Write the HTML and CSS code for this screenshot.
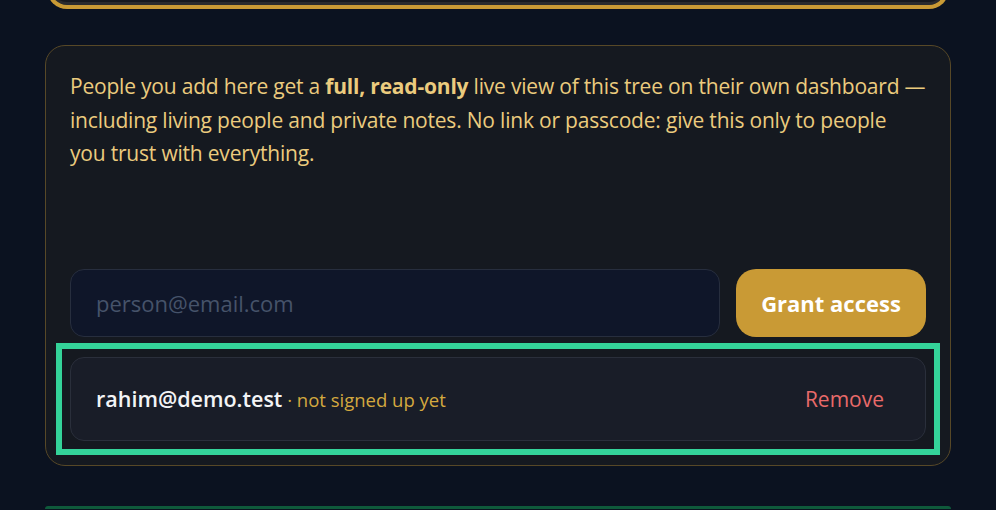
FILE: index.html
```html
<!DOCTYPE html>
<html lang="en">
<head>
<meta charset="utf-8">
<title>Share tree</title>
<link rel="stylesheet" href="styles.css">
</head>
<body>
<div class="page">
  <div class="prev-card"></div>
  <section class="card">
    <p class="intro">People you add here get a <strong>full, read-only</strong> live view of this tree on their own dashboard — including living people and private notes. No link or passcode: give this only to people you trust with everything.</p>
    <form class="grant" onsubmit="return false">
      <input class="email-input" type="email" placeholder="person@email.com">
      <button class="grant-btn" type="submit">Grant access</button>
    </form>
    <div class="viewer-row">
      <div class="viewer-info"><span class="viewer-email">rahim@demo.test</span><span class="viewer-status"> · not signed up yet</span></div>
      <button class="remove-btn" type="button">Remove</button>
    </div>
  </section>
  <div class="next-card"></div>
</div>
</body>
</html>
```
FILE: styles.css
```css
* { box-sizing: border-box; }
html, body { margin: 0; padding: 0; }
body {
  background: #0b1220;
  font-family: "Open Sans", "Noto Sans", sans-serif;
  overflow: hidden;
  height: 510px;
}
.page {
  padding: 0 45px;
}
.prev-card {
  height: 40px;
  margin: -31px 2px 0;
  background: #16191f;
  border: 4px solid #c99a35;
  border-top: none;
  border-radius: 0 0 20px 20px;
  box-shadow: inset 0 -3px 0 #2a2b2e;
}
.card {
  margin-top: 36px;
  background: #151920;
  border: 1px solid #574827;
  border-radius: 20px;
  padding: 24px;
}
.intro {
  margin: 0 0 98px;
  color: #ebcb7e;
  font-size: 21px;
  line-height: 33.5px;
  letter-spacing: -0.2px;
}
.intro strong { font-weight: 700; }
.grant {
  display: flex;
  gap: 16px;
  margin: 0;
}
.email-input {
  flex: 1;
  height: 68px;
  background: #0f1629;
  border: 1px solid #272e3e;
  border-radius: 14px;
  padding: 0 25px;
  font-family: inherit;
  font-size: 22px;
  color: #e5e7eb;
  outline: none;
}
.email-input::placeholder { color: #46536a; }
.grant-btn {
  width: 190px;
  height: 68px;
  background: #c99a35;
  border: none;
  border-radius: 20px;
  color: #ffffff;
  font-family: inherit;
  font-size: 22px;
  font-weight: 700;
  cursor: pointer;
}
.viewer-row {
  position: relative;
  margin-top: 20px;
  height: 84px;
  display: flex;
  align-items: center;
  justify-content: space-between;
  background: #191d28;
  border: 1px solid #2a2f3b;
  border-radius: 14px;
  padding: 0 25px;
}
.viewer-row::after {
  content: "";
  position: absolute;
  inset: -15px;
  border: 6px solid #34d399;
  pointer-events: none;
}
.viewer-email {
  color: #f3f4f6;
  font-size: 21.5px;
  font-weight: 600;
}
.viewer-status {
  color: #d4a93f;
  font-size: 18.5px;
}
.remove-btn {
  background: none;
  border: none;
  padding: 8px 16px;
  color: #e86a6a;
  font-family: inherit;
  font-size: 21px;
  cursor: pointer;
}
.next-card {
  margin-top: 40px;
  height: 3px;
  background: #0f5a3b;
  border-radius: 20px 20px 0 0;
}
```
